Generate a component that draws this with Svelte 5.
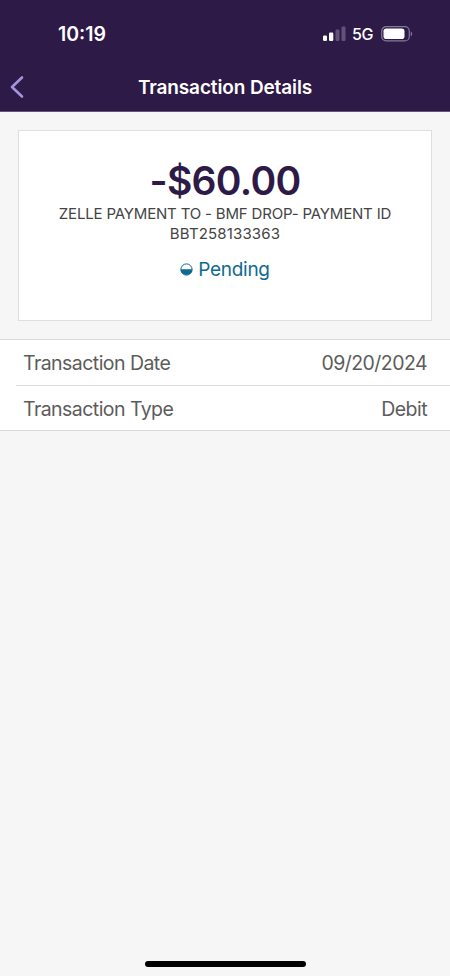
<script>
  const amount = "-$60.00";
  const description = ["ZELLE PAYMENT TO - BMF DROP- PAYMENT ID", "BBT258133363"];

  const rows = [
    { label: "Transaction Date", value: "09/20/2024" },
    { label: "Transaction Type", value: "Debit" },
  ];
</script>

<style>
  :global(body) {
    background: #f6f6f6;
  }

  .screen {
    display: flex;
    flex-direction: column;
    height: 976px;
    overflow: hidden;
    background: #f6f6f6;
    font-family: Inter, "Liberation Sans", sans-serif;
    white-space: nowrap;
  }

  header {
    height: 111px;
    background: #2e1a47;
    color: #fff;
    border-bottom: 1px solid #665675;
  }

  .status {
    display: flex;
    align-items: center;
    height: 68px;
    padding: 0 37px 0 58px;
    box-sizing: border-box;
  }

  .time {
    flex: 1;
    font-size: 19.5px;
    font-weight: 600;
    letter-spacing: 0;
  }

  .network {
    margin: 0 8px 0 6px;
    font-size: 16px;
    font-weight: 500;
    letter-spacing: -0.4px;
  }

  svg {
    display: block;
  }

  nav {
    display: grid;
    grid-template-columns: 60px 1fr 60px;
    align-items: center;
    height: 38px;
  }

  .back {
    margin: 0;
    padding: 0 0 0 9px;
    border: 0;
    background: none;
  }

  h1 {
    margin: 0;
    text-align: center;
    font-size: 19px;
    font-weight: 600;
    letter-spacing: -0.12px;
  }

  .card {
    height: 189px;
    margin: 18px 18px 18px;
    border: 1px solid #dfdfe0;
    background: #fff;
    text-align: center;
  }

  .amount {
    margin-top: 26px;
    color: #2e1a47;
    font-size: 39px;
    font-weight: 600;
    letter-spacing: -0.7px;
    line-height: 48px;
  }

  .description {
    margin: -1px 0 0;
    color: #444;
    font-size: 15px;
    letter-spacing: -0.18px;
    line-height: 20px;
  }

  .description span:last-of-type {
    letter-spacing: 0.15px;
  }

  .pending {
    display: flex;
    justify-content: center;
    align-items: center;
    gap: 5px;
    margin-top: 12px;
    color: #0f6a91;
    font-size: 19px;
    letter-spacing: -0.3px;
    line-height: 27px;
  }

  .details {
    margin: 0;
    border-top: 1px solid #dadadb;
    border-bottom: 1px solid #dadadb;
    background: #fff;
    color: #5c5c5c;
    font-size: 19.5px;
    letter-spacing: -0.55px;
  }

  .row {
    display: flex;
    justify-content: space-between;
    align-items: center;
    height: 45px;
    margin-left: 16px;
    padding: 1px 23px 0 7px;
    box-sizing: border-box;
  }

  .row + .row {
    border-top: 1px solid #dedede;
  }

  dd {
    margin: 0;
  }

  .home {
    width: 161px;
    height: 6px;
    margin: auto auto 9px;
    border-radius: 3px;
    background: #000;
  }
</style>

<div class="screen">
  <header>
    <div class="status">
      <span class="time">10:19</span>
      <svg width="23" height="16" viewBox="0 0 23 16" fill="#fff">
        <rect x="0" y="9.5" width="4" height="5.5" rx="1.2" />
        <rect x="6" y="6.5" width="4.3" height="8.5" rx="1.2" />
        <rect x="12.5" y="3.5" width="4" height="11.5" rx="1.2" opacity=".25" />
        <rect x="18.5" y="0.5" width="4" height="14.5" rx="1.2" opacity=".25" />
      </svg>
      <span class="network">5G</span>
      <svg width="32" height="16" viewBox="0 0 32 16">
        <rect x=".7" y=".7" width="27.6" height="14.2" rx="4.5" fill="none" stroke="#87799a" stroke-width="1.2" />
        <rect x="2.5" y="2.5" width="21" height="10.6" rx="2.8" fill="#fff" />
        <path d="M29.8 5.4c1.8.7 1.8 4.1 0 4.8z" fill="#87799a" />
      </svg>
    </div>
    <nav>
      <button class="back" aria-label="Back">
        <svg width="16" height="24" viewBox="0 0 16 24">
          <path d="M13 2.5 3 12l10 9.5" fill="none" stroke="#a394dc" stroke-width="2.6" stroke-linecap="round" stroke-linejoin="round" />
        </svg>
      </button>
      <h1>Transaction Details</h1>
    </nav>
  </header>

  <section class="card">
    <div class="amount">{amount}</div>
    <p class="description">
      {#each description as line}
        <span>{line}</span><br />
      {/each}
    </p>
    <div class="pending">
      <svg width="13" height="13" viewBox="0 0 13 13">
        <circle cx="6.5" cy="6.5" r="5.6" fill="#fff" stroke="#0f6a91" stroke-width="1" />
        <path d="M.6 6.2h11.8a5.9 5.9 0 0 1-11.8 0z" fill="#0f6a91" />
      </svg>
      <span>Pending</span>
    </div>
  </section>

  <dl class="details">
    {#each rows as row}
      <div class="row">
        <dt>{row.label}</dt>
        <dd>{row.value}</dd>
      </div>
    {/each}
  </dl>

  <div class="home"></div>
</div>
